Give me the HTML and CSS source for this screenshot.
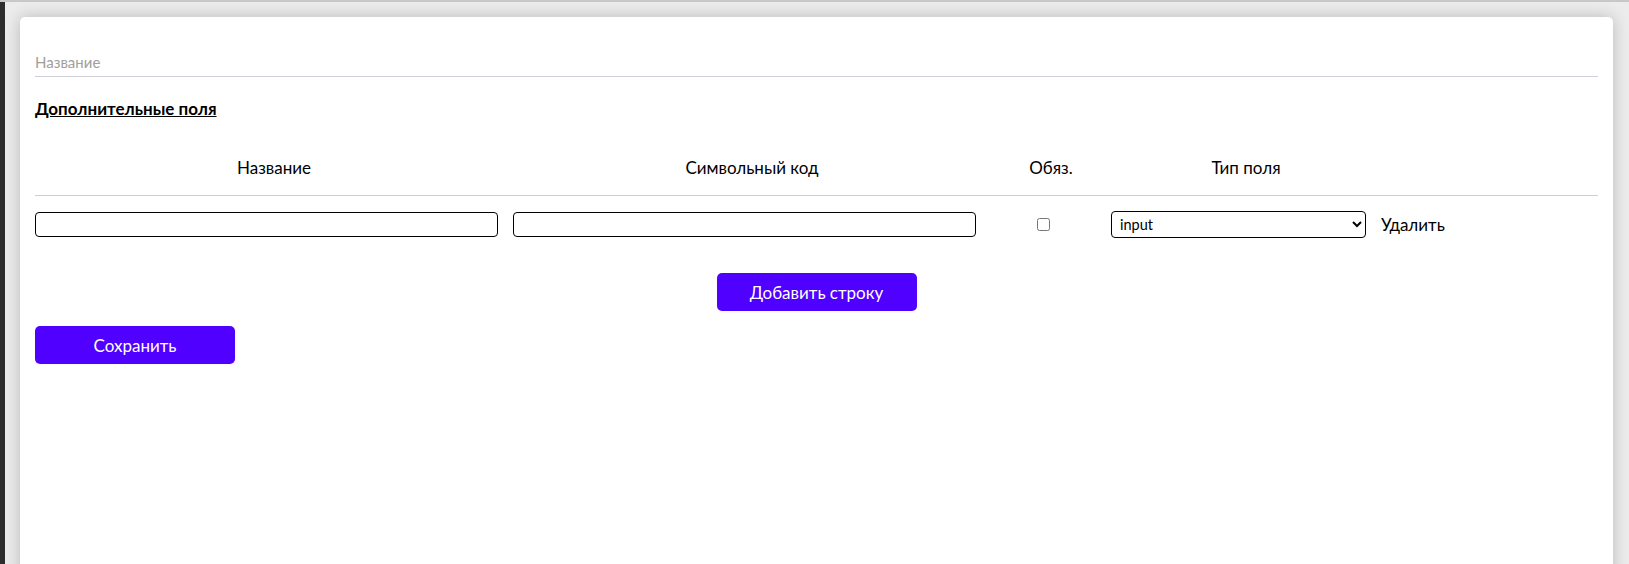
FILE: index.html
```html
<!DOCTYPE html>
<html lang="ru">
<head>
<meta charset="utf-8">
<title>Дополнительные поля</title>
<link rel="stylesheet" href="styles.css">
</head>
<body>
<div class="screen">
  <div class="side-strip"></div>
  <div class="backdrop">
    <div class="card">
      <input class="name-input" type="text" placeholder="Название">
      <h3 class="section-title">Дополнительные поля</h3>
      <table class="fields">
        <colgroup>
          <col class="c-name">
          <col class="c-code">
          <col class="c-req">
          <col class="c-type">
          <col class="c-del">
        </colgroup>
        <thead>
          <tr>
            <th>Название</th>
            <th>Символьный код</th>
            <th>Обяз.</th>
            <th>Тип поля</th>
            <th></th>
          </tr>
        </thead>
        <tbody>
          <tr>
            <td><input class="cell-input" type="text"></td>
            <td><input class="cell-input" type="text"></td>
            <td><input class="check" type="checkbox"></td>
            <td>
              <select class="cell-select">
                <option>input</option>
                <option>textarea</option>
                <option>select</option>
              </select>
            </td>
            <td class="last"><span class="delete">Удалить</span></td>
          </tr>
        </tbody>
      </table>
      <div class="add-row">
        <button class="btn" type="button">Добавить строку</button>
      </div>
      <button class="btn" type="button">Сохранить</button>
    </div>
  </div>
</div>
</body>
</html>
```
FILE: styles.css
```css
html, body {
  margin: 0;
  padding: 0;
  height: 100%;
  overflow: hidden;
}

body {
  font-family: Lato, "Open Sans", "Liberation Sans", sans-serif;
  color: #000;
  background: #ececec;
}

.screen {
  display: flex;
  height: 100vh;
  box-sizing: border-box;
  border-top: 2px solid #c8c8c8;
}

.side-strip {
  width: 5px;
  flex: none;
  background: #2d2d2d;
}

.backdrop {
  flex: 1;
  padding: 15px 16px 0 15px;
  background: #ececec;
}

.card {
  box-sizing: border-box;
  min-height: 620px;
  background: #fff;
  border-radius: 5px;
  box-shadow: 0 0 16px rgba(0, 0, 0, 0.22);
  padding: 30px 15px 0 15px;
}

.name-input {
  display: block;
  box-sizing: border-box;
  width: 100%;
  height: 30px;
  border: 0;
  border-bottom: 1px solid #d0d0d8;
  padding: 0;
  font-family: inherit;
  font-size: 15px;
  color: #000;
  outline: none;
  background: transparent;
}

.name-input::placeholder {
  color: #a39e9a;
}

.section-title {
  margin: 22px 0 0 0;
  font-size: 17px;
  line-height: 20px;
  font-weight: 700;
  text-decoration: underline;
}

.fields {
  width: 100%;
  margin-top: 20px;
  border-collapse: collapse;
  table-layout: fixed;
}

.c-name { width: 478px; }
.c-code { width: 478px; }
.c-req { width: 120px; }
.c-type { width: 270px; }

.fields th {
  font-weight: 400;
  font-size: 17px;
  line-height: 20px;
  text-align: center;
  padding: 19px 0 17px 0;
  border-bottom: 1px solid #cfcfcf;
}

.fields td {
  padding: 15px 15px 15px 0;
  vertical-align: middle;
}

.fields td.last {
  padding-right: 0;
}

.cell-input {
  display: block;
  box-sizing: border-box;
  width: 100%;
  height: 25px;
  border: 1px solid #000;
  border-radius: 4px;
  padding: 0 6px;
  font-family: inherit;
  font-size: 14px;
}

.check {
  display: block;
  margin: 0 auto;
  width: 13px;
  height: 13px;
}

.cell-select {
  display: block;
  box-sizing: border-box;
  width: 100%;
  height: 27px;
  border: 1px solid #000;
  border-radius: 4px;
  padding: 0 4px;
  background: #fff;
  color: #000;
  font-family: inherit;
  font-size: 14.5px;
}

.delete {
  font-size: 17px;
  line-height: 20px;
  cursor: pointer;
}

.add-row {
  display: flex;
  justify-content: center;
  margin-top: 20px;
  margin-bottom: 15px;
}

.btn {
  display: block;
  width: 200px;
  height: 38px;
  border: 0;
  border-radius: 5px;
  background: #5000ff;
  color: #fff;
  font-family: inherit;
  font-size: 17px;
  cursor: pointer;
}
```
